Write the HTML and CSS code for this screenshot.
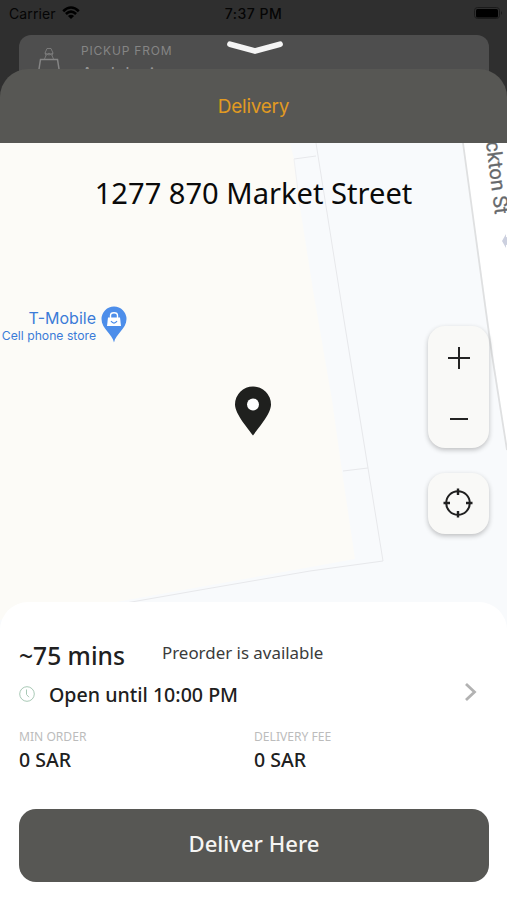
FILE: index.html
```
<!DOCTYPE html>
<html lang="en">
<head>
<meta charset="utf-8">
<title>Delivery</title>
<link rel="stylesheet" href="styles.css">
</head>
<body>
<div class="app">
  <header class="status">
    <div class="carrier"><span class="carrier-name">Carrier</span>
      <svg width="18" height="14" viewBox="0 0 18 14"><path d="M1.2 5.2Q9-2.200 16.800 5.200M3.900 8Q9 3.200 14.100 8" fill="none" stroke="#000" stroke-width="2.600"/><path d="M5.900 9.900Q9 7.400 12.100 9.900L9 13Z"/></svg>
    </div>
    <span class="clock">7:37 PM</span>
    <svg class="battery" width="30" height="14" viewBox="0 0 30 14"><rect x="1.500" y="1.500" width="25" height="11" rx="3" fill="none" stroke="#1b1b1b"/><rect x="3" y="3" width="22" height="8.500" rx="1.500"/><path d="M28 5q2 2 0 4z" fill="#1b1b1b"/></svg>
  </header>

  <section class="pickup">
    <svg class="bag" width="24" height="36" viewBox="0 0 24 36" fill="none" stroke="#858585"><path d="M2 36V24L3.500 14.500H20.500L22 24V36" stroke-width="1.500"/><path d="M7.500 14L9 10.500 8 8 10 3.500H14L16 8 15 10.500 16.500 14M9 10.500Q12 6 15 10.500M8 8L12 10 16 8" stroke-width=".8"/></svg>
    <div class="pickup-text"><span class="pickup-label">PICKUP FROM</span><span class="pickup-place">Andalusia</span></div>
    <svg class="handle" width="58" height="16" viewBox="0 0 58 16"><path d="M4 4.200L29 11 54 4.200" fill="none" stroke="#f5f5f5" stroke-width="5.800" stroke-linecap="round" stroke-linejoin="round"/></svg>
  </section>

  <main class="sheet">
    <div class="tab">Delivery</div>
    <section class="map">
      <svg class="map-art" width="507" height="490" viewBox="0 143 507 490">
        <rect y="143" width="507" height="490" fill="#f8fafc"/>
        <path d="M0 143H290L294 159L300 207L313 290L332 400L342 471L355 559L200 587L105 604L0 620Z" fill="#fcfbf7"/>
        <path d="M463 143L489 325L507 450V143Z" fill="#fff"/>
        <path d="M463 143L486 312L492 355L507 450" fill="none" stroke="#dfe0e1" stroke-width="1.800"/>
        <g fill="none" stroke="#e7e8eb" stroke-width="1"><path d="M316 143L344 320L368 468L383 561L310 571L200 590L120 604M294 159L316 156M343 471L368 468"/><path d="M294 159L300 207" stroke="#f0f1f3"/></g>
        <text class="street" transform="translate(486 142) rotate(83)">ckton St</text>
        <path d="M502 241L506 234V237L512 238V244L506 245V248Z" fill="#ccd0df"/>
        <path d="M114 342.500C112.500 334 101.500 329 101.500 319A12.500 12.500 0 0 1 126.500 319C126.500 329 115.500 334 114 342.500Z" fill="#4d8eea"/>
        <path d="M108 317.500H120L121 326H107Z" fill="#fff"/><path d="M110.500 318V315.500Q110.500 312.800 114 312.800T117.500 315.500V318" fill="none" stroke="#fff" stroke-width="1.400"/><path d="M111 321.200Q114 325 117 321.200" fill="none" stroke="#4d8eea" stroke-width="1.300"/>
        <path d="M253 435.500C248.500 429 235 414 235 404.500A18 18 0 0 1 271 404.500C271 414 257.500 429 253 435.500Z" fill="#1f201e"/>
        <circle cx="253" cy="404.500" r="6" fill="#fff"/>
      </svg>
      <h1 class="address">1277 870 Market Street</h1>
      <div class="poi"><span class="poi-name">T-Mobile</span><span class="poi-kind">Cell phone store</span></div>
      <div class="controls">
        <div class="zoom">
          <svg width="24" height="24" viewBox="0 0 24 24"><path d="M1 12H23M12 1V23" stroke="#232323" stroke-width="2"/></svg>
          <svg width="24" height="24" viewBox="0 0 24 24"><path d="M3 12H21" stroke="#232323" stroke-width="2"/></svg>
        </div>
        <div class="locate">
          <svg width="30" height="30" viewBox="0 0 30 30" fill="none" stroke="#202020" stroke-width="2"><circle cx="15" cy="15" r="11.800"/><path d="M15 .5V7M15 23V29.500M.5 15H7M23 15H29.500" stroke-width="2.400"/></svg>
        </div>
      </div>
    </section>

    <section class="details">
      <div class="eta"><span class="mins">~75 mins</span><span class="preorder">Preorder is available</span></div>
      <div class="hours">
        <svg width="16" height="16" viewBox="0 0 16 16" fill="none" stroke="#a9c9b6" stroke-width="1"><circle cx="8" cy="8" r="7.300"/><path d="M7.500 3.500V8.500L10 11.200"/></svg>
        <span class="open">Open until 10:00 PM</span>
        <svg class="next" width="14" height="20" viewBox="0 0 14 20"><path d="M2 2L10.500 10L2 18" fill="none" stroke="#b2b2b2" stroke-width="2.800"/></svg>
      </div>
      <div class="fees">
        <div class="fee"><span class="fee-label">MIN ORDER</span><span class="fee-value">0 SAR</span></div>
        <div class="fee"><span class="fee-label">DELIVERY FEE</span><span class="fee-value">0 SAR</span></div>
      </div>
      <button class="deliver" type="button">Deliver Here</button>
    </section>
  </main>
</div>
</body>
</html>
```
FILE: styles.css
```
* { box-sizing: border-box; }
body { margin: 0; font-family: "Noto Sans", sans-serif; }
svg { display: block; flex: none; }
.app { width: 507px; height: 900px; overflow: hidden; background: #2f2f2f; display: flex; flex-direction: column; }

.status { height: 35px; flex: none; display: grid; grid-template-columns: 1fr auto 1fr; padding: 5px 5px 0 9px; font-family: Inter, sans-serif; font-size: 14px; line-height: 18px; color: #050505; }
.carrier { display: flex; gap: 6px; }
.carrier-name { letter-spacing: .1px; }
.carrier svg { margin-top: 1px; }
.clock { font-weight: 500; font-size: 14px; letter-spacing: .5px; position: relative; left: -2px; }
.battery { justify-self: end; margin-top: 1px; margin-right: -1px; }
.pickup { position: relative; height: 70px; flex: none; margin: 0 18px 0 19px; padding-left: 18px; display: flex; gap: 20px; background: #4e4e4e; border-radius: 12px 12px 0 0; }
.bag { margin-top: 10px; }
.pickup-text { display: flex; flex-direction: column; font-family: Inter, sans-serif; color: #858585; padding-top: 9px; }
.pickup-label { font-size: 12px; line-height: 14px; letter-spacing: .8px; }
.pickup-place { font-size: 18px; line-height: 22px; margin-top: 6px; color: #959595; }
.handle { position: absolute; left: 207px; top: 5px; }

.sheet { position: relative; margin-top: -36px; height: 831px; flex: none; display: flex; flex-direction: column; background: #575754; border-radius: 28px 28px 0 0; overflow: hidden; }
.tab { height: 74px; flex: none; color: #e19a22; font-family: Inter, sans-serif; font-size: 19px; letter-spacing: -.25px; line-height: 75px; text-align: center; }
.map { position: relative; height: 490px; flex: none; }
.map-art { position: absolute; left: 0; top: 0; }
.street { font: 400 20.2px Roboto, sans-serif; fill: #66696c; stroke: #66696c; stroke-width: .3px; }
.address { position: relative; margin: 0; padding-top: 30px; font-weight: 400; font-size: 29.1px; line-height: 40px; text-align: center; color: #0a0a0a; white-space: nowrap; }
.poi { position: absolute; left: 0; top: 165px; width: 96px; display: flex; flex-direction: column; align-items: flex-end; font-family: Inter, sans-serif; color: #3b7bd8; white-space: nowrap; }
.poi-name { font-size: 16px; line-height: 20px; }
.poi-kind { font-size: 12.2px; line-height: 16px; }
.controls { position: absolute; left: 428px; top: 183px; display: flex; flex-direction: column; gap: 25px; }
.zoom, .locate { width: 61px; background: #f9f9f7; border-radius: 17px; box-shadow: 0 2px 5px rgba(0,0,0,.24); display: flex; flex-direction: column; align-items: center; }
.zoom { height: 122px; padding: 20px 0 0 1px; gap: 37px; }
.locate { height: 61px; justify-content: center; padding: 0 1px 1px 0; }

.details { position: relative; margin-top: -31px; flex: 1; background: #fff; border-radius: 28px 28px 0 0; padding: 36px 18px 0 19px; color: #202020; }
.eta { display: flex; height: 36px; }
.mins { width: 143px; font-size: 24.6px; font-weight: 500; line-height: 36px; white-space: nowrap; }
.preorder { font-size: 16.9px; line-height: 29px; color: #3b3b3b; }
.hours { height: 40px; display: flex; align-items: center; }
.open { margin-left: 14px; font-size: 19.6px; font-weight: 500; }
.next { margin-left: auto; margin-right: 11px; margin-top: -4px; }
.fees { display: grid; grid-template-columns: 1fr 1fr; margin-top: 14px; }
.fee { display: flex; flex-direction: column; align-items: flex-start; }
.fee-label { font-size: 12.1px; line-height: 18px; color: #bcbcbc; }
.fee-value { font-size: 19.5px; line-height: 27px; font-weight: 500; }
.deliver { display: block; width: 470px; height: 73px; margin: 35.500px 0 0; padding: 0 0 4px; border: 0; border-radius: 17px; background: #575754; color: #f5f5f3; font: 500 22.1px "Noto Sans", sans-serif; }
```
